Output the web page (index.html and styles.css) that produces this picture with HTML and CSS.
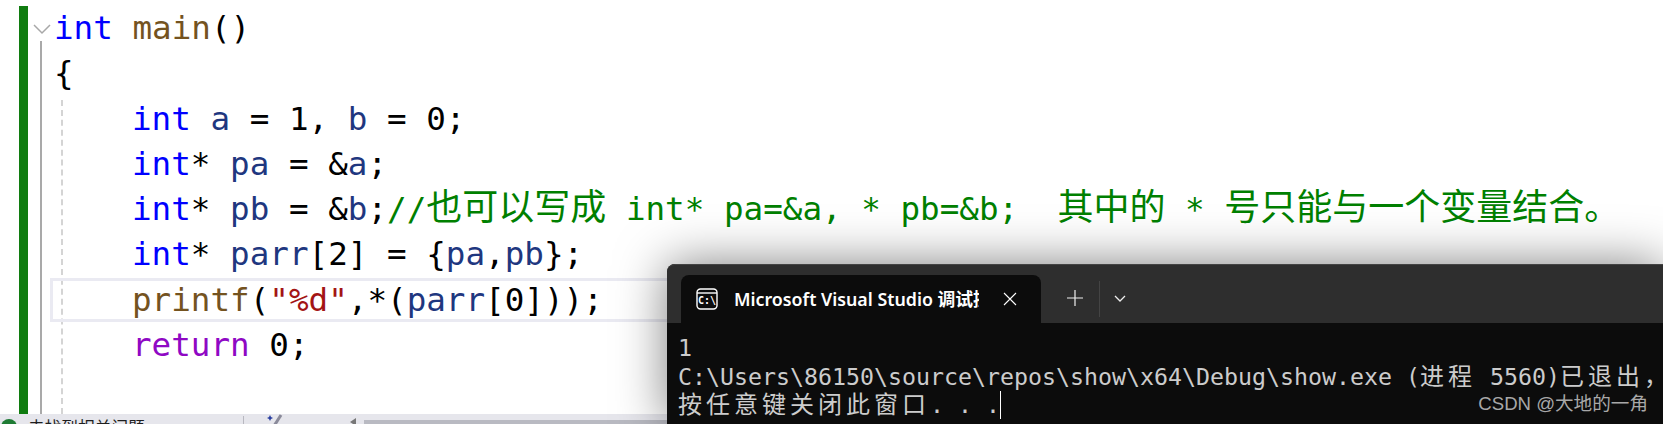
FILE: index.html
```html
<!DOCTYPE html>
<html lang="zh">
<head>
<meta charset="utf-8">
<title>Visual Studio</title>
<link rel="stylesheet" href="styles.css">
</head>
<body>
<div class="editor">
  <div class="change-bar"></div>
  <div class="code-area">
    <div class="outline-line"></div>
    <div class="indent-guide"></div>
    <svg class="fold" width="18" height="12" viewBox="0 0 18 12"><path d="M1 2l8 8 8-8" fill="none" stroke="#a8a8a8" stroke-width="1.5"/></svg>
    <div class="current-line"></div>
    <div class="line"><span class="kw">int</span> <span class="fn">main</span>()</div>
    <div class="line">{</div>
    <div class="line in"><span class="kw">int</span> <span class="var">a</span> = 1, <span class="var">b</span> = 0;</div>
    <div class="line in"><span class="kw">int</span>* <span class="var">pa</span> = &amp;<span class="var">a</span>;</div>
    <div class="line in"><span class="kw">int</span>* <span class="var">pb</span> = &amp;<span class="var">b</span>;<span class="cm">//<span class="zh">也可以写成</span> int* pa=&amp;a, * pb=&amp;b;  <span class="zh">其中的</span> * <span class="zh">号只能与一个变量结合。</span></span></div>
    <div class="line in"><span class="kw">int</span>* <span class="var">parr</span>[2] = {<span class="var">pa</span>,<span class="var">pb</span>};</div>
    <div class="line in"><span class="fn">printf</span>(<span class="str">"%d"</span>,*(<span class="var">parr</span>[0]));</div>
    <div class="line in"><span class="ret">return</span> 0;</div>
  </div>
</div>
<div class="status">
  <svg class="ok" width="16" height="16" viewBox="0 0 16 16"><circle cx="8" cy="8" r="8" fill="#1e7b34"/></svg>
  <span class="status-text">未找到相关问题</span>
  <span class="status-sep"></span>
  <svg class="wand" width="20" height="12" viewBox="0 0 20 12"><path d="M9 12l7-11" stroke="#8a8a9a" stroke-width="3"/><path d="M4 3l1-2 1 2 2 1-2 1-1 2-1-2-2-1z" fill="#2a3fa0"/></svg>
  <svg class="caret-left" width="6" height="8" viewBox="0 0 6 8"><path d="M6 0v8L0 4z" fill="#777"/></svg>
  <div class="scroll"></div>
</div>
<div class="terminal">
  <div class="tabbar">
    <div class="tab">
      <svg class="tab-icon" width="22" height="22" viewBox="0 0 22 22"><rect x="1" y="1" width="20" height="20" rx="3.5" fill="none" stroke="#fff" stroke-width="1.4"/><path d="M1 5h20" stroke="#fff" stroke-width="1.4"/><text x="11" y="15.5" class="tab-icon-text" text-anchor="middle">C:\</text></svg>
      <span class="tab-title">Microsoft Visual Studio 调试控制台</span>
      <svg class="tab-close" width="14" height="14" viewBox="0 0 14 14"><path d="M1 1l12 12M13 1L1 13" stroke="#fff" stroke-width="1.1"/></svg>
    </div>
    <svg class="plus" width="16" height="16" viewBox="0 0 16 16"><path d="M8 0v16M0 8h16" stroke="#eee" stroke-width="1.2"/></svg>
    <span class="tab-sep"></span>
    <svg class="chev" width="12" height="8" viewBox="0 0 12 8"><path d="M1 1l5 5 5-5" fill="none" stroke="#eee" stroke-width="1.3"/></svg>
  </div>
  <div class="console">
    <div class="con-line">1</div>
    <div class="con-line">C:\Users\86150\source\repos\show\x64\Debug\show.exe (<span class="con-zh">进程</span> 5560)<span class="con-zh">已退出，</span></div>
    <div class="con-line"><span class="con-zh">按任意键关闭此窗口</span>. . .<span class="cursor"></span></div>
  </div>
  <div class="watermark">CSDN @大地的一角</div>
</div>
</body>
</html>
```
FILE: styles.css
```css
html, body { margin: 0; padding: 0; }
body { width: 1663px; height: 424px; overflow: hidden; background: #fff; position: relative; display: flex; flex-direction: column; }
.editor { height: 414px; display: flex; padding-left: 19px; }
.change-bar { width: 9px; background: #107c10; margin-top: 6px; }
.code-area { position: relative; flex: 1; padding: 6px 0 0 26px; }
.line { font: 32.6px/45.3px "DejaVu Sans Mono", "Noto Sans CJK SC", monospace; color: #000; white-space: pre; height: 45.3px; position: relative; }
.in { padding-left: 78px; }
.kw { color: #0000ff; }
.fn { color: #74531f; }
.var { color: #1f377f; }
.str { color: #a31515; }
.ret { color: #8f08c4; }
.cm { color: #008000; }
.zh { font-family: "Noto Sans CJK SC", sans-serif; font-size: 36px; line-height: 0; }
.outline-line { position: absolute; left: 12px; top: 41px; bottom: 0; width: 2px; background: #a9a9a9; }
.indent-guide { position: absolute; left: 33px; top: 100px; bottom: 0; border-left: 2px dashed #d4d4d4; }
.fold { position: absolute; left: 5px; top: 23px; }
.current-line { position: absolute; left: 22px; right: 0; top: 278px; height: 44px; box-sizing: border-box; border: 3px solid #eaeaf2; }
.status { height: 10px; background: #e6e6ec; display: flex; align-items: flex-start; overflow: hidden; position: relative; }
.ok { margin: 5px 0 0 1px; flex: none; }
.status-text { font: 16.7px/22px "Noto Sans CJK SC", sans-serif; color: #1e1e1e; margin: 2px 0 0 11px; width: 215px; flex: none; white-space: nowrap; }
.status-sep { width: 1px; height: 10px; background: #b8b8c0; margin-top: 2px; flex: none; }
.wand { margin: 0 0 0 21px; flex: none; }
.caret-left { margin: 4px 0 0 65px; flex: none; }
.scroll { flex: 1; height: 10px; margin: 6px 0 0 8px; background: #b9bac2; }
.terminal { position: absolute; left: 667px; top: 264px; width: 996px; height: 160px; background: #0c0c0c; border-top-left-radius: 8px; box-shadow: 0 0 50px rgba(0,0,0,.5); display: flex; flex-direction: column; }
.tabbar { height: 59px; flex: none; background: #2e2e2e; border-top-left-radius: 8px; border-top: 1px solid #444; box-sizing: border-box; display: flex; align-items: flex-start; padding-left: 14px; }
.tab { width: 360px; height: 48px; margin-top: 10px; background: #0c0c0c; border-radius: 8px 8px 0 0; display: flex; align-items: center; box-sizing: border-box; padding: 0 24px 0 15px; flex: none; }
.tab-icon { flex: none; }
.tab-icon-text { font: 700 10px "DejaVu Sans Mono", monospace; fill: #fff; }
.tab-title { font: 600 17.8px/24px "Noto Sans", "Noto Sans CJK SC", sans-serif; color: #fff; margin-left: 16px; width: 245px; white-space: nowrap; overflow: hidden; flex: none; }
.tab-close { margin-left: 24px; flex: none; }
.plus { margin: 25px 0 0 26px; flex: none; }
.tab-sep { width: 1px; height: 36px; background: #444; margin: 16px 0 0 16px; flex: none; }
.chev { margin: 30px 0 0 14px; flex: none; }
.console { padding: 11px 0 0 11px; font: 23.25px/28.5px "DejaVu Sans Mono", monospace; color: #cccccc; }
.con-line { white-space: pre; height: 28.5px; }
.con-zh { font-family: "Noto Sans CJK SC", sans-serif; font-size: 24px; letter-spacing: 4px; line-height: 0; }
.cursor { display: inline-block; width: 1px; height: 28px; background: #fff; vertical-align: -6px; }
.watermark { position: absolute; right: 15px; bottom: 9px; font: 18.6px/22px "Liberation Sans", "Noto Sans CJK SC", sans-serif; color: #a8a8a8; }
```
